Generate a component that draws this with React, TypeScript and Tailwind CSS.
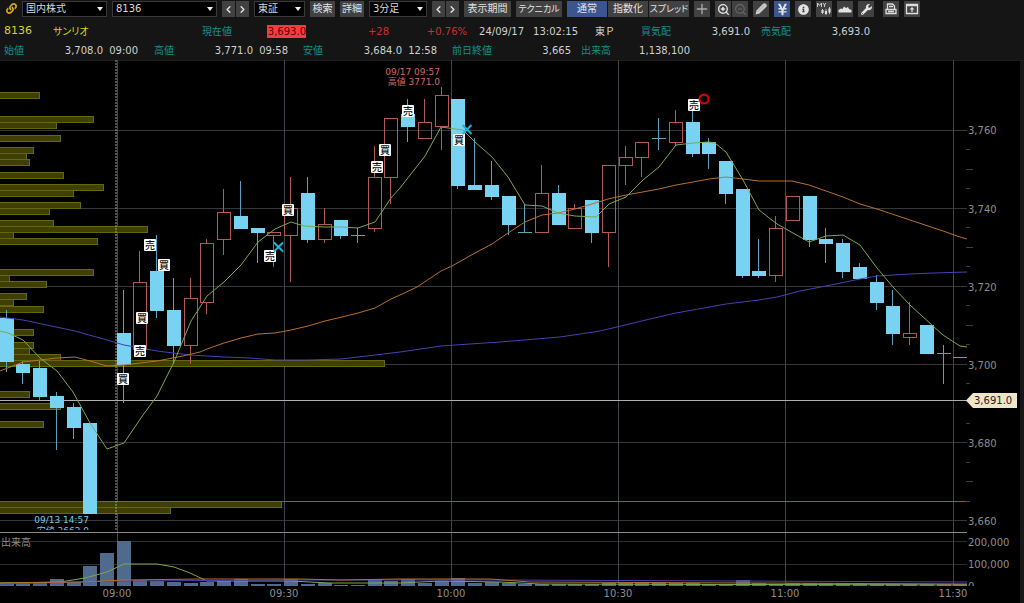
import type { ReactNode } from 'react';
import { ChevronLeft, ChevronRight, Plus, ZoomIn, ZoomOut } from 'lucide-react';
import { FaInfoCircle, FaLink, FaWrench, FaYenSign } from 'react-icons/fa';

type Candle = [open: number, high: number, low: number, close: number];
type Point = [x: number, y: number];

const FIRST = -7;
const STEP = 16.73;
const PLOT_RIGHT = 967;

// null is the gap between the two sessions
const candles: (Candle | null)[] = [
  [3712, 3714, 3698, 3701],
  [3700, 3701, 3695, 3698],
  [3699, 3701, 3691, 3692],
  [3692, 3693, 3678, 3689],
  [3689, 3690, 3681, 3684],
  [3685, 3685, 3662, 3662],
  null,
  [3708, 3719, 3690, 3700],
  [3704, 3729, 3704, 3721],
  [3724, 3733, 3712, 3714],
  [3714, 3722, 3700, 3705],
  [3705, 3722, 3700, 3717],
  [3716, 3732, 3713, 3731],
  [3732, 3745, 3728, 3739],
  [3738, 3747, 3735, 3735],
  [3735, 3735, 3726, 3734],
  [3733, 3734, 3725, 3734],
  [3733, 3748, 3721, 3740],
  [3744, 3748, 3731, 3732],
  [3732, 3740, 3731, 3736],
  [3737, 3737, 3732, 3733],
  [3733, 3735, 3731, 3733],
  [3735, 3756, 3734, 3748],
  [3748, 3763, 3741, 3763],
  [3764, 3768, 3757, 3761],
  [3758, 3768, 3758, 3762],
  [3761, 3771, 3755, 3769],
  [3768, 3768, 3745, 3746],
  [3746, 3758, 3745, 3745],
  [3746, 3752, 3742, 3743],
  [3743, 3743, 3733, 3736],
  [3734, 3741, 3734, 3734],
  [3734, 3751, 3734, 3744],
  [3744, 3746, 3736, 3736],
  [3735, 3741, 3735, 3740],
  [3742, 3742, 3731, 3734],
  [3734, 3751, 3725, 3751],
  [3751, 3756, 3746, 3753],
  [3753, 3757, 3748, 3757],
  [3758, 3763, 3755, 3758],
  [3757, 3765, 3756, 3762],
  [3762, 3768, 3753, 3754],
  [3757, 3758, 3750, 3754],
  [3752, 3752, 3741, 3744],
  [3745, 3745, 3722, 3723],
  [3724, 3732, 3722, 3723],
  [3723, 3738, 3721, 3735],
  [3737, 3743, 3737, 3743],
  [3743, 3743, 3730, 3732],
  [3732, 3735, 3726, 3731],
  [3731, 3732, 3722, 3724],
  [3725, 3726, 3722, 3722],
  [3721, 3723, 3714, 3716],
  [3715, 3719, 3705, 3708],
  [3707, 3716, 3705, 3708],
  [3710, 3710, 3703, 3703],
  [3703, 3705, 3695, 3703],
  [3702, 3702, 3702, 3702],
];

// bar heights in the volume pane
const volumes = [
  3, 3, 3, 7, 4, 20, 33, 45, 6, 5, 4, 3, 4, 5, 7, 2, 2, 7, 2, 3, 1, 1, 7, 5, 7, 3, 5, 8, 3, 4, 3, 2, 2, 2, 2,
  2, 3, 3, 3, 4, 3, 3, 2, 2, 6, 3, 2, 3, 3, 3, 3, 2, 2, 2, 2, 2, 2, 2,
];

// [top, length] of each price band
const profile: Point[] = [
  [93, 40], [117, 94], [123, 57], [136, 61], [148, 34], [154, 27], [160, 30], [173, 64], [185, 104],
  [191, 74], [203, 81], [209, 50], [221, 54], [227, 148], [233, 14], [239, 98], [270, 94], [276, 10],
  [282, 47], [294, 27], [300, 14], [307, 44], [330, 34], [343, 34], [349, 30], [355, 61], [361, 385],
  [392, 30], [404, 61], [422, 44], [502, 282], [508, 171],
];

const maShort: Point[] = [
  [0, 331], [8, 333], [23, 340], [40, 358], [57, 371], [73, 392], [90, 423], [107, 449], [124, 443],
  [143, 415], [157, 396], [174, 362], [191, 321], [200, 307], [207, 296], [224, 282], [241, 265],
  [258, 242], [275, 229], [291, 222], [304, 226], [324, 227], [341, 227], [358, 228], [375, 222],
  [391, 198], [400, 188], [425, 156], [441, 127], [463, 130], [475, 142], [492, 157], [508, 177],
  [525, 205], [542, 206], [558, 213], [575, 216], [596, 217], [609, 204], [626, 197], [643, 180],
  [659, 167], [676, 145], [693, 143], [709, 142], [715, 143], [726, 152], [743, 180], [759, 210],
  [777, 224], [793, 233], [809, 242], [826, 236], [843, 235], [860, 245], [877, 268], [893, 287],
  [910, 305], [933, 326], [943, 335], [960, 346], [967, 347],
];

const maMiddle: Point[] = [
  [0, 371], [23, 362], [57, 358], [75, 357], [90, 361], [107, 366], [124, 365], [157, 361], [183, 356],
  [200, 352], [207, 349], [224, 343], [241, 338], [258, 334], [275, 333], [291, 330], [308, 326],
  [325, 321], [342, 317], [358, 313], [375, 308], [391, 299], [400, 295], [417, 287], [441, 271],
  [452, 266], [475, 253], [492, 244], [508, 233], [525, 222], [542, 215], [558, 213], [575, 209],
  [592, 204], [608, 199], [626, 195], [659, 189], [676, 185], [693, 182], [709, 179], [726, 177],
  [743, 179], [759, 181], [792, 181], [809, 185], [826, 191], [843, 197], [860, 204], [877, 209],
  [910, 220], [943, 231], [960, 237], [967, 239],
];

const maLong: Point[] = [
  [0, 317], [23, 320], [75, 331], [107, 340], [124, 345], [157, 351], [190, 355], [224, 357], [250, 358],
  [275, 360], [308, 360], [341, 359], [375, 355], [400, 352], [441, 346], [470, 344], [500, 342],
  [560, 337], [600, 331], [650, 319], [676, 313], [726, 304], [759, 300], [777, 297], [800, 291],
  [826, 286], [860, 279], [877, 276], [910, 274], [933, 273], [967, 272],
];

const volShort: Point[] = [
  [0, 583], [60, 582], [85, 578], [107, 572], [124, 564], [157, 564], [174, 567], [190, 573], [207, 581],
  [290, 581], [330, 583], [400, 583], [440, 581], [500, 582], [540, 584], [967, 585],
];
const volMiddle: Point[] = [
  [0, 583], [80, 582], [124, 580], [200, 579], [300, 579], [340, 580], [400, 579], [490, 579], [530, 582],
  [967, 584],
];
const volLong: Point[] = [[0, 584], [120, 581], [300, 580], [500, 580], [967, 582]];

const trades: [kind: '買' | '売', x: number, y: number][] = [
  ['売', 150, 244], ['買', 164, 264], ['買', 142, 317], ['売', 140, 350], ['買', 123, 378],
  ['売', 270, 255], ['買', 288, 209], ['売', 377, 166], ['買', 385, 149], ['売', 408, 110],
  ['買', 459, 139], ['売', 694, 104],
];

const hours: [string, number][] = [
  ['09:00', 117], ['09:30', 284], ['10:00', 451], ['10:30', 618], ['11:00', 785], ['11:30', 953],
];

const xAt = (i: number) => Math.floor(124.25 + (i + FIRST) * STEP);
const yAt = (price: number) => 130 + (3760 - price) * 3.907;
const line = (points: Point[]) => points.map((p) => p.join(',')).join(' ');

function CandleMark({ index, candle }: { index: number; candle: Candle }) {
  const [open, high, low, close] = candle;
  const x = xAt(index);
  const top = Math.round(yAt(Math.max(open, close)));
  const bottom = Math.round(yAt(Math.min(open, close)));
  const up = close > open;
  const color = up ? '#b25a5a' : '#5aa2bf';

  return (
    <g shapeRendering="crispEdges">
      <path
        d={`M${x - 0.5} ${yAt(high)}V${top}M${x - 0.5} ${bottom}V${yAt(low)}`}
        stroke={color}
        fill="none"
      />
      {open === close ? (
        <path d={`M${x - 7} ${top + 0.5}h14`} stroke={color} />
      ) : up ? (
        <rect x={x - 6.5} y={top + 0.5} width={13} height={bottom - top} fill="none" stroke={color} />
      ) : (
        <rect x={x - 7} y={top} width={14} height={bottom - top + 1} fill="#78d2f1" />
      )}
    </g>
  );
}

function Chart() {
  return (
    <svg
      viewBox="0 60 1024 543"
      className="block w-full bg-black font-['DejaVu_Sans','Noto_Sans_CJK_JP',sans-serif]"
      role="img"
      aria-label="サンリオ 3分足チャート">
      <defs>
        <clipPath id="plot">
          <rect x="0" y="60" width={PLOT_RIGHT} height="470" />
        </clipPath>
        <clipPath id="volume">
          <rect x="0" y="533" width={PLOT_RIGHT} height="54" />
        </clipPath>
        <clipPath id="axis">
          <rect x={PLOT_RIGHT} y="533" width="57" height="53" />
        </clipPath>
      </defs>
      <rect x="1020" y="60" width="4" height="543" fill="#171717" />
      <path d="M0 60.5H1024" stroke="#1c1c1c" />

      {/* grid */}
      <g shapeRendering="crispEdges" stroke="#34373b">
        {[3760, 3740, 3720, 3700, 3680, 3660].map((price) => (
          <path key={price} d={`M0 ${Math.floor(yAt(price)) + 0.5}H${PLOT_RIGHT}`} />
        ))}
        <path d="M0 541.5H967M0 564.5H967" stroke="#2a2c2f" />
        {hours.map(([label, x]) => (
          <path key={label} d={`M${x + 0.5} 60V586`} stroke="#41444b" />
        ))}
      </g>

      <g clipPath="url(#plot)">
        <g shapeRendering="crispEdges" fill="#3f3f00" stroke="#66660c">
          {profile.map(([y, width]) => (
            <rect key={y} x="-1" y={y - 0.5} width={width + 0.5} height="6" />
          ))}
        </g>
        <rect x="100" y="501" width="17" height="1" fill="#666" />
        <rect x="117" y="501" width="850" height="1" fill="#1f9a1f" />
        <rect x="0" y="400" width="967" height="1" fill="#b0b0b0" />
        <path d="M116 60V530" stroke="#a0a0a0" strokeDasharray="2 1" />

        {candles.map((candle, i) => candle && <CandleMark key={i} index={i} candle={candle} />)}

        <g fill="none" strokeWidth="1">
          <polyline points={line(maLong)} stroke="#4a40b0" />
          <polyline points={line(maMiddle)} stroke="#b8702f" />
          <polyline points={line(maShort)} stroke="#7da850" />
        </g>

        <g fontSize="9" textAnchor="end">
          <g fill="#cf6868">
            <text x="440" y="75">09/17 09:57</text>
            <text x="440" y="85">高値 3771.0</text>
          </g>
          <g fill="#78c8e8">
            <text x="89" y="523">09/13 14:57</text>
            <text x="89" y="534">安値 3662.0</text>
          </g>
        </g>

        {trades.map(([kind, x, y]) => (
          <g key={x}>
            <rect x={x - 6} y={y - 5} width="12" height="12" rx="1" fill="#fff" />
            <text x={x} y={y + 5} fontSize="10" fontWeight="500" textAnchor="middle" fill="#111">
              {kind}
            </text>
          </g>
        ))}
        <path
          d="M274 242.500l9 9m0-9l-9 9M462.500 125l9 9m0-9l-9 9"
          stroke="#19b9d8"
          strokeWidth="2"
        />
        <circle cx="704" cy="99" r="4.500" fill="none" stroke="#e00000" strokeWidth="2" />
      </g>

      {/* volume pane */}
      <path d="M0 532.5H967" stroke="#8a8a8a" shapeRendering="crispEdges" />
      <g clipPath="url(#volume)">
        {volumes.map((height, i) => (
          <rect
            key={i}
            x={xAt(i) - 7}
            y={586 - height}
            width="14"
            height={height}
            fill="#4f6a8c"
            shapeRendering="crispEdges"
          />
        ))}
        <g fill="none">
          <polyline points={line(volShort)} stroke="#7da850" />
          <polyline points={line(volLong)} stroke="#4a40b0" />
          <polyline points={line(volMiddle)} stroke="#b8702f" />
        </g>
      </g>
      <text x="1" y="546" fontSize="10" fill="#8d8d8d">出来高</text>

      {/* axes */}
      <g fontSize="10" fill="#8d8d8d">
        {[3760, 3740, 3720, 3700, 3680, 3660].map((price) => (
          <text key={price} x="968" y={Math.ceil(yAt(price)) + 4}>
            {price.toLocaleString('en-US')}
          </text>
        ))}
        <g clipPath="url(#axis)">
          <text x="968" y="546">200,000</text>
          <text x="968" y="568">100,000</text>
          <text x="968" y="590">0</text>
        </g>
        {hours.map(([label, x]) => (
          <text key={label} x={x} y="597" textAnchor="middle">
            {label}
          </text>
        ))}
      </g>
      <g stroke="#3f3f3f" shapeRendering="crispEdges">
        {[3755, 3750, 3745, 3735, 3730, 3725, 3715, 3710, 3705, 3695, 3685, 3675, 3670, 3665].map((price) => (
          <path key={price} d={`M966 ${Math.floor(yAt(price)) + 0.5}h${price % 10 ? 4 : 7}`} />
        ))}
      </g>
      <path d="M966 400.500L973 393H1017V408H973Z" fill="#efe3c8" />
      <text x="974" y="404" fontSize="10" fill="#222">3,691.0</text>
    </svg>
  );
}

function Select({ label, value, className }: { label: string; value: string; className: string }) {
  return (
    <div className={`relative h-4 shrink-0 ${className}`}>
      <select
        aria-label={label}
        defaultValue={value}
        className="block h-4 w-full appearance-none border border-[#3a3a3a] bg-black pl-[3px] text-[10px] leading-3 text-[#d8d8d8]">
        <option>{value}</option>
      </select>
      <svg viewBox="0 0 6 4" className="pointer-events-none absolute top-1.5 right-1 h-1 w-1.5">
        <path d="M0 0H6L3 4Z" fill="#eee" />
      </svg>
    </div>
  );
}

function ToolButton({
  children,
  label,
  active = false,
  className = 'w-4',
}: {
  children: ReactNode;
  label?: string;
  active?: boolean;
  className?: string;
}) {
  return (
    <button
      type="button"
      aria-label={label}
      className={`flex h-4 shrink-0 items-center justify-center whitespace-nowrap leading-none text-[#e4e4e4] ${
        active ? 'bg-[#3b5590]' : 'bg-[#414141]'
      } ${className}`}>
      {children}
    </button>
  );
}

function Arrows() {
  return (
    <div className="flex shrink-0 gap-px">
      <ToolButton label="前へ" className="w-[13px]">
        <ChevronLeft size={11} strokeWidth={3} />
      </ToolButton>
      <ToolButton label="次へ" className="w-[13px]">
        <ChevronRight size={11} strokeWidth={3} />
      </ToolButton>
    </div>
  );
}

function Toolbar() {
  return (
    <div className="flex gap-[5px] pt-px pl-1.5">
      <FaLink className="mt-0.5 w-[11px] shrink-0 text-[11px] text-[#d3a81c]" />
      <Select label="商品" value="国内株式" className="w-[85px]" />
      <Select label="銘柄コード" value="8136" className="w-[105px]" />
      <Arrows />
      <Select label="市場" value="東証" className="w-[51px]" />
      <ToolButton className="w-[25px]">検索</ToolButton>
      <ToolButton className="w-[24px]">詳細</ToolButton>
      <Select label="足種" value="3分足" className="w-[58px]" />
      <Arrows />
      <ToolButton className="w-[47px]">表示期間</ToolButton>
      <ToolButton className="w-[46px] text-[9px] [font-feature-settings:'palt']">テクニカル</ToolButton>
      <div className="flex shrink-0 gap-px">
        <ToolButton active className="w-10">通常</ToolButton>
        <ToolButton className="w-10">指数化</ToolButton>
        <ToolButton className="w-10 text-[9px] [font-feature-settings:'palt']">スプレッド</ToolButton>
      </div>
      <ToolButton label="十字線">
        <Plus size={16} strokeWidth={2} className="text-[#aaa]" />
      </ToolButton>
      <div className="flex shrink-0 gap-px">
        <ToolButton label="拡大">
          <ZoomIn size={13} strokeWidth={2.5} />
        </ToolButton>
        <ToolButton label="縮小">
          <ZoomOut size={13} className="text-[#6a6a6a]" />
        </ToolButton>
      </div>
      <ToolButton label="描画">
        <svg viewBox="0 0 16 16" className="size-4">
          <path d="M2.500 13.500L3.500 9.500L10 2.800Q11.500 1.500 13 3Q14.500 4.500 13.200 6L6.500 12.500Z" fill="#ccc" />
          <path d="M5 10.500L11 4.500" stroke="#999" strokeWidth="0.700" />
        </svg>
      </ToolButton>
      <ToolButton label="約定表示" active>
        <FaYenSign size={13} />
      </ToolButton>
      <ToolButton label="情報">
        <FaInfoCircle size={11} />
      </ToolButton>
      <ToolButton label="マイチャート">
        <svg viewBox="0 0 16 16" className="size-4" fill="none" stroke="#ddd">
          <path d="M1.500 6V2L3.500 4.500L5.500 2V6M7 2L8.500 4L10 2M8.500 4V6" strokeWidth="0.900" />
          <path d="M6.500 8v5M10 8v6M13.500 6v7" strokeWidth="0.800" />
          <path d="M6.500 9v3M10 10v3M13.500 7.500v4" strokeWidth="2.200" />
        </svg>
      </ToolButton>
      <ToolButton label="価格帯別出来高">
        <svg viewBox="0 0 16 16" className="size-4">
          <path d="M1.500 11.500V9L4 7.500L5.500 8L7 5.500L9 7L11 6L12 8L14.500 9V11.500Z" fill="#e4e4e4" />
        </svg>
      </ToolButton>
      <ToolButton label="設定">
        <FaWrench size={11} />
      </ToolButton>
      <ToolButton label="印刷" className="ml-1 w-4">
        <svg viewBox="0 0 16 16" className="size-4" fill="none" stroke="#ddd" strokeWidth="1.300">
          <path d="M4.500 8V3H9.500L11.500 5V8M6 5.500H10M3 8.500H13V12.500H3ZM5 10.500H11" />
        </svg>
      </ToolButton>
      <ToolButton label="別画面">
        <svg viewBox="0 0 16 16" className="size-4" fill="none" stroke="#ddd" strokeWidth="1.300">
          <path d="M2.500 3.500H13.500V12.500H2.500ZM2.500 4.500H13.500M8 11V7.500" />
          <path d="M5.500 8.500L8 6L10.500 8.500Z" fill="#ddd" stroke="none" />
        </svg>
      </ToolButton>
    </div>
  );
}

function Label({ children, className }: { children: ReactNode; className: string }) {
  return <span className={`shrink-0 text-[#11908c] ${className}`}>{children}</span>;
}

function Value({ children, className }: { children: ReactNode; className: string }) {
  return <span className={`shrink-0 text-right ${className}`}>{children}</span>;
}

function Quote() {
  return (
    <div className="mt-[5px] pl-1 whitespace-nowrap text-[#d0d0d0]">
      <div className="flex h-[19px] items-center">
        <span className="w-[49px] shrink-0 text-[11px] text-[#d6d61c]">8136</span>
        <h1 className="w-[149px] shrink-0 text-[#d6d61c] [font-feature-settings:'palt']">サンリオ</h1>
        <Label className="w-[65px]">現在値</Label>
        <Value className="w-[39px] bg-[#f83a3a] leading-[13px] text-[#4c0808]">3,693.0</Value>
        <Value className="w-[83px] text-[#cf2f2f]">+28</Value>
        <Value className="w-[78px] text-[#cf2f2f]">+0.76%</Value>
        <Value className="w-[57px]">24/09/17</Value>
        <Value className="w-[54px]">13:02:15</Value>
        <Value className="w-[37px]">東Ｐ</Value>
        <Label className="w-[60px] pl-[26px]">買気配</Label>
        <Value className="w-[75px]">3,691.0</Value>
        <Label className="w-[41px] pl-[11px]">売気配</Label>
        <Value className="w-[79px]">3,693.0</Value>
      </div>
      <div className="flex h-[19px] items-center">
        <Label className="w-5">始値</Label>
        <Value className="w-[79px]">3,708.0</Value>
        <Value className="w-[35px]">09:00</Value>
        <Label className="w-[36px] pl-4">高値</Label>
        <Value className="w-[79px]">3,771.0</Value>
        <Value className="w-[35px]">09:58</Value>
        <Label className="w-[35px] pl-[15px]">安値</Label>
        <Value className="w-[79px]">3,684.0</Value>
        <Value className="w-[35px]">12:58</Value>
        <Label className="w-[55px] pl-[15px]">前日終値</Label>
        <Value className="w-[79px]">3,665</Value>
        <Label className="w-[40px] pl-[10px]">出来高</Label>
        <Value className="w-[79px]">1,138,100</Value>
      </div>
    </div>
  );
}

export default function App() {
  return (
    <main
      className="overflow-hidden bg-[#151515] font-['DejaVu_Sans','Noto_Sans_CJK_JP',sans-serif] text-[10px]"
      lang="ja">
      <header>
        <Toolbar />
        <Quote />
      </header>
      <Chart />
    </main>
  );
}
